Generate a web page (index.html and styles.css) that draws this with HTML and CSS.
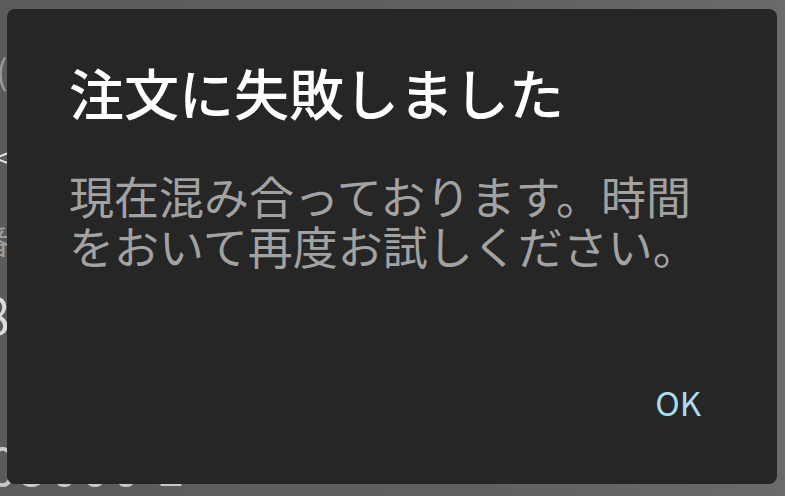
FILE: index.html
```html
<!DOCTYPE html>
<html lang="ja">
<head>
<meta charset="utf-8">
<link rel="stylesheet" href="styles.css">
</head>
<body>
<div class="backdrop">
  <div class="bg-line bg-paren">(</div>
  <div class="bg-line bg-chev">&lt;</div>
  <div class="bg-line bg-ban">番</div>
  <div class="bg-line bg-eight">8</div>
  <div class="bg-line bg-total">05000 1</div>
</div>
<div class="dialog" role="alertdialog">
  <h1 class="dialog-title">注文に失敗しました</h1>
  <p class="dialog-body">現在混み合っております。時間をおいて再度お試しください。</p>
  <div class="dialog-actions">
    <button class="dialog-btn">OK</button>
  </div>
</div>
</body>
</html>
```
FILE: styles.css
```css
html, body {
  margin: 0;
  padding: 0;
  width: 785px;
  height: 496px;
  overflow: hidden;
}
body {
  position: relative;
  background: linear-gradient(90deg, #5b5b5b 0%, #606060 60%, #6a6a6a 100%);
  font-family: "Noto Sans CJK JP", "Noto Sans", sans-serif;
}
.backdrop {
  display: flex;
  flex-direction: column;
  color: #9c9c9c;
  height: 496px;
}
.bg-line {
  line-height: 1;
}
.bg-paren {
  margin-top: 54px;
  margin-left: -4px;
  font-size: 34px;
  color: #9a9a9a;
}
.bg-chev {
  margin-top: 56px;
  margin-left: -6px;
  font-size: 26px;
  color: #e4e4e4;
}
.bg-ban {
  margin-top: 54px;
  margin-left: -22px;
  font-size: 32px;
  color: #9d9d9d;
}
.bg-eight {
  margin-top: 32px;
  margin-left: -18px;
  font-size: 50px;
  color: #dcdcdc;
}
.bg-total {
  margin-top: 100px;
  margin-left: -12px;
  font-size: 52px;
  color: #c8c8c8;
  letter-spacing: 2px;
}
.dialog {
  position: absolute;
  left: 7px;
  top: 9px;
  width: 770px;
  height: 475px;
  box-sizing: border-box;
  background: #262626;
  border-radius: 8px;
  padding: 44px 64px 0 62px;
  display: flex;
  flex-direction: column;
}
.dialog-title {
  margin: 0;
  font-size: 55px;
  font-weight: 500;
  line-height: 76px;
  color: #ffffff;
}
.dialog-body {
  margin: 42px 0 0;
  font-size: 45px;
  font-weight: 400;
  line-height: 50px;
  color: #a2a2a2;
}
.dialog-actions {
  display: flex;
  justify-content: flex-end;
  margin-top: auto;
  padding-bottom: 62px;
}
.dialog-btn {
  background: none;
  border: none;
  padding: 0 12px 0 0;
  font-family: "Noto Sans CJK JP", "Noto Sans", sans-serif;
  font-size: 33px;
  line-height: 40px;
  color: #a9dfeb;
  font-weight: 400;
}
```
